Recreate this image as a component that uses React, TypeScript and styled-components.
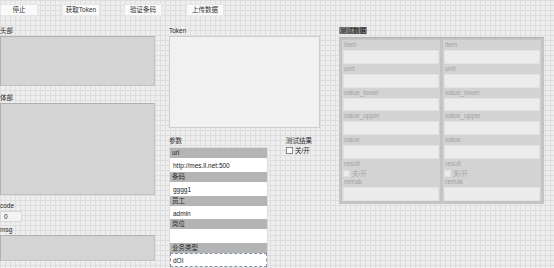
import React from 'react';
import styled, { createGlobalStyle } from 'styled-components';

const GlobalStyle = createGlobalStyle`
  html, body {
    margin: 0;
    padding: 0;
    overflow: hidden;
  }
  body {
    font-family: "Liberation Sans", "Noto Sans CJK SC", sans-serif;
    font-size: 6.5px;
    color: #2b2b2b;
  }
`;

const Panel = styled.div`
  width: 554px;
  height: 268px;
  box-sizing: border-box;
  padding-top: 4px;
  background-color: #eeeeee;
  background-image:
    linear-gradient(#dedede 1px, transparent 1px),
    linear-gradient(90deg, #dedede 1px, transparent 1px);
  background-size: 5px 5px;
`;

const Toolbar = styled.div`
  display: flex;
  gap: 24px;
  height: 12px;
`;

const PanelButton = styled.button`
  width: 38px;
  height: 12px;
  padding: 0;
  background: #fafafa;
  border: 1px solid #e6e6e6;
  font-family: inherit;
  font-size: 6.5px;
  color: #333;
  line-height: 10px;
`;

const Columns = styled.div`
  display: grid;
  grid-template-columns: 169px 170px 205px;
  margin-top: 10px;
`;

const Column = styled.div<{ $width: number }>`
  display: flex;
  flex-direction: column;
  width: ${p => p.$width}px;
`;

const Caption = styled.div<{ $top?: number; $mark?: boolean }>`
  height: 10px;
  line-height: 10px;
  margin-top: ${p => p.$top ?? 0}px;
  white-space: nowrap;
  ${p => p.$mark ? 'align-self: flex-start; background: #8c8c8c; color: #151515; line-height: 7px; height: 7px; margin-bottom: 3px; margin-top: 1px; padding: 0 1px;' : ''}
`;

const Indicator = styled.div<{ $height: number }>`
  height: ${p => p.$height}px;
  box-sizing: border-box;
  background: #d4d4d4;
  border: 1px solid #c2c2c2;
  border-top-color: #b0b0b0;
  border-left-color: #b0b0b0;
`;

const NumBox = styled.div`
  width: 22px;
  height: 11px;
  box-sizing: border-box;
  padding-left: 3px;
  line-height: 10px;
  background: #f3f3f3;
  border: 1px solid #d8d8d8;
`;

const TokenBox = styled.div`
  width: 151px;
  height: 92px;
  box-sizing: border-box;
  background: #f1f1f1;
  border: 1px solid #cdcdcd;
`;

const LowerRow = styled.div`
  display: flex;
  margin-top: 8px;
`;

const ParamCluster = styled.div`
  width: 99px;
  height: 121px;
  margin-top: 1px;
  box-sizing: border-box;
  border: 1px solid #dcdcdc;
  background: #e6e6e6;
`;

const ParamBar = styled.div`
  height: 10px;
  line-height: 10px;
  padding-left: 2px;
  background: #b4b4b4;
  color: #2a2a2a;
`;

const ParamInput = styled.div<{ $focus?: boolean }>`
  height: 13.75px;
  line-height: 13px;
  box-sizing: border-box;
  padding-left: 2px;
  background: #ffffff;
  color: #222;
  border: 1px ${p => p.$focus ? 'dashed #7f93aa' : 'solid #ffffff'};
`;

const ResultGroup = styled.div`
  margin-left: 18px;
  display: flex;
  flex-direction: column;
`;

const CheckRow = styled.div<{ $dim?: boolean }>`
  display: flex;
  align-items: center;
  gap: 2px;
  height: 8px;
  color: ${p => p.$dim ? '#a6a6a6' : '#2b2b2b'};
`;

const CheckBox = styled.span<{ $dim?: boolean }>`
  width: 5px;
  height: 5px;
  background: ${p => p.$dim ? '#ececec' : '#ffffff'};
  border: 1px solid ${p => p.$dim ? '#e0e0e0' : '#8a8a8a'};
`;

const ArrayFrame = styled.div`
  width: 205px;
  height: 167px;
  box-sizing: border-box;
  padding: 2px 3px 3px 3px;
  display: flex;
  gap: 3px;
  background: #c4c4c4;
  border-top: 1px solid #b4b4b4;
`;

const DataCluster = styled.div`
  flex: 1;
  display: flex;
  flex-direction: column;
  background: #d3d3d3;
  padding: 0 1px;
`;

const DataLabel = styled.div`
  height: 10px;
  line-height: 10px;
  padding-left: 1px;
  color: #a3a3a3;
`;

const DataInput = styled.div`
  height: 14px;
  box-sizing: border-box;
  background: #ececec;
  border: 1px solid #e2e2e2;
`;

const params = [
  { label: 'url', value: 'http://mes.ll.net:500' },
  { label: '条码', value: 'gggg1' },
  { label: '员工', value: 'admin' },
  { label: '岗位', value: '' },
  { label: '业务类型', value: 'dOI' },
];

const fields = ['item', 'unit', 'value_lower', 'value_upper', 'value'];

const TestCluster: React.FC = () => (
  <DataCluster>
    {fields.map(f => (
      <React.Fragment key={f}>
        <DataLabel>{f}</DataLabel>
        <DataInput />
      </React.Fragment>
    ))}
    <DataLabel>result</DataLabel>
    <CheckRow $dim>
      <CheckBox $dim />
      关/开
    </CheckRow>
    <DataLabel>remak</DataLabel>
    <DataInput />
  </DataCluster>
);

const App: React.FC = () => {
  return (
    <Panel>
      <GlobalStyle />
      <Toolbar>
        <PanelButton>停止</PanelButton>
        <PanelButton>获取Token</PanelButton>
        <PanelButton>验证条码</PanelButton>
        <PanelButton>上传数据</PanelButton>
      </Toolbar>
      <Columns>
        <Column $width={155}>
          <Caption>头部</Caption>
          <Indicator $height={50} />
          <Caption $top={7}>体部</Caption>
          <Indicator $height={92} />
          <Caption $top={6}>code</Caption>
          <NumBox>0</NumBox>
          <Caption $top={3}>msg</Caption>
          <Indicator $height={26} />
        </Column>
        <Column $width={151}>
          <Caption>Token</Caption>
          <TokenBox />
          <LowerRow>
            <Column $width={99}>
              <Caption>参数</Caption>
              <ParamCluster>
                {params.map((p, i) => (
                  <React.Fragment key={p.label}>
                    <ParamBar>{p.label}</ParamBar>
                    <ParamInput $focus={i === params.length - 1}>{p.value}</ParamInput>
                  </React.Fragment>
                ))}
              </ParamCluster>
            </Column>
            <ResultGroup>
              <Caption>测试结果</Caption>
              <CheckRow>
                <CheckBox />
                关/开
              </CheckRow>
            </ResultGroup>
          </LowerRow>
        </Column>
        <Column $width={205}>
          <Caption $mark>测试数据</Caption>
          <ArrayFrame>
            <TestCluster />
            <TestCluster />
          </ArrayFrame>
        </Column>
      </Columns>
    </Panel>
  );
};

export default App;
